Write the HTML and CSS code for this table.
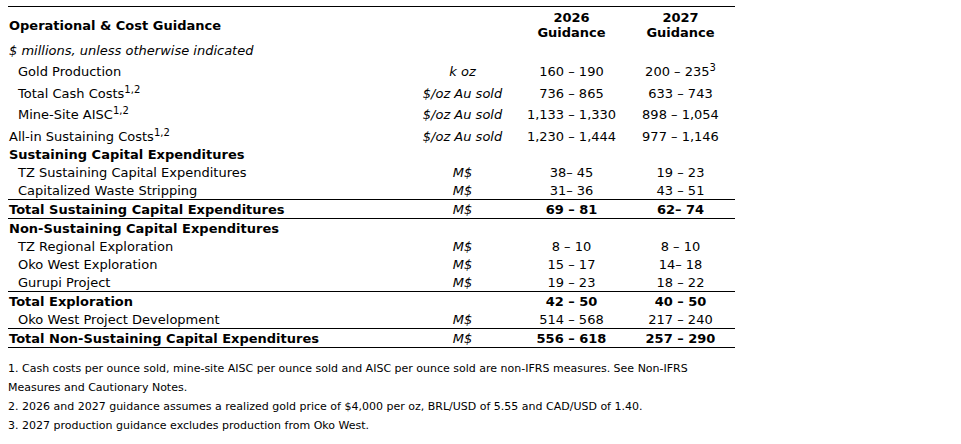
FILE: index.html
```html
<!DOCTYPE html>
<html lang="en">
<head>
<meta charset="utf-8">
<title>Operational &amp; Cost Guidance</title>
<link rel="stylesheet" href="styles.css">
</head>
<body>
<div class="wrap">
  <table class="guide">
    <colgroup>
      <col class="c-label">
      <col class="c-unit">
      <col class="c-num">
      <col class="c-num">
    </colgroup>
    <thead>
      <tr class="head">
        <th class="label">Operational &amp; Cost Guidance</th>
        <th></th>
        <th class="num">2026<br>Guidance</th>
        <th class="num">2027<br>Guidance</th>
      </tr>
    </thead>
    <tbody>
      <tr><td class="label note" colspan="4">$ millions, unless otherwise indicated</td></tr>
      <tr class="sup-a"><td class="label ind">Gold Production</td><td class="unit">k oz</td><td class="num">160 – 190</td><td class="num">200 – 235<sup>3</sup></td></tr>
      <tr class="sup-b"><td class="label ind">Total Cash Costs<sup>1,2</sup></td><td class="unit">$/oz Au sold</td><td class="num">736 – 865</td><td class="num">633 – 743</td></tr>
      <tr class="sup-a"><td class="label ind">Mine-Site AISC<sup>1,2</sup></td><td class="unit">$/oz Au sold</td><td class="num">1,133 – 1,330</td><td class="num">898 – 1,054</td></tr>
      <tr class="sup-b"><td class="label">All-in Sustaining Costs<sup>1,2</sup></td><td class="unit">$/oz Au sold</td><td class="num">1,230 – 1,444</td><td class="num">977 – 1,146</td></tr>
      <tr><td class="label bold" colspan="4">Sustaining Capital Expenditures</td></tr>
      <tr><td class="label ind">TZ Sustaining Capital Expenditures</td><td class="unit">M$</td><td class="num">38– 45</td><td class="num">19 – 23</td></tr>
      <tr><td class="label ind">Capitalized Waste Stripping</td><td class="unit">M$</td><td class="num">31– 36</td><td class="num">43 – 51</td></tr>
      <tr class="total boxed"><td class="label bold">Total Sustaining Capital Expenditures</td><td class="unit">M$</td><td class="num bold">69 – 81</td><td class="num bold">62– 74</td></tr>
      <tr><td class="label bold" colspan="4">Non-Sustaining Capital Expenditures</td></tr>
      <tr><td class="label ind">TZ Regional Exploration</td><td class="unit">M$</td><td class="num">8 – 10</td><td class="num">8 – 10</td></tr>
      <tr><td class="label ind">Oko West Exploration</td><td class="unit">M$</td><td class="num">15 – 17</td><td class="num">14– 18</td></tr>
      <tr><td class="label ind">Gurupi Project</td><td class="unit">M$</td><td class="num">19 – 23</td><td class="num">18 – 22</td></tr>
      <tr class="total"><td class="label bold">Total Exploration</td><td class="unit"></td><td class="num bold">42 – 50</td><td class="num bold">40 – 50</td></tr>
      <tr><td class="label ind">Oko West Project Development</td><td class="unit">M$</td><td class="num">514 – 568</td><td class="num">217 – 240</td></tr>
      <tr class="total boxed"><td class="label bold">Total Non-Sustaining Capital Expenditures</td><td class="unit">M$</td><td class="num bold">556 – 618</td><td class="num bold">257 – 290</td></tr>
    </tbody>
  </table>
  <div class="notes">
    <p>1. Cash costs per ounce sold, mine-site AISC per ounce sold and AISC per ounce sold are non-IFRS measures. See Non-IFRS Measures and Cautionary Notes.</p>
    <p>2. 2026 and 2027 guidance assumes a realized gold price of $4,000 per oz, BRL/USD of 5.55 and CAD/USD of 1.40.</p>
    <p>3. 2027 production guidance excludes production from Oko West.</p>
  </div>
</div>
</body>
</html>
```

FILE: styles.css
```css
html, body {
  margin: 0;
  padding: 0;
  background: #ffffff;
}

body {
  font-family: Verdana, "DejaVu Sans", sans-serif;
  color: #000000;
}

.wrap {
  width: 727px;
  padding: 6px 8px 0 8px;
}

.guide {
  width: 727px;
  border-collapse: collapse;
  table-layout: fixed;
  font-size: 13px;
  border-top: 1px solid #000;
}

.c-label { width: 400px; }
.c-unit { width: 109px; }
.c-num { width: 109px; }

.guide th,
.guide td {
  padding: 1px 0 0 0;
  line-height: 17px;
  white-space: nowrap;
}

.head th {
  line-height: 15px;
  padding-top: 3px;
  padding-bottom: 1px;
  font-weight: bold;
  vertical-align: middle;
}

.label {
  text-align: left;
  padding-left: 1px !important;
}

.ind {
  padding-left: 10px !important;
}

.note {
  font-style: italic;
}

.unit {
  text-align: center;
  font-style: italic;
}

.num {
  text-align: center;
}

.bold {
  font-weight: bold;
}

sup {
  font-size: 10px;
  line-height: 0;
  vertical-align: 5px;
}

.guide .sup-a td {
  padding-top: 4px;
}

.guide .sup-b td {
  padding-top: 5px;
}

.total td {
  border-top: 1px solid #000;
}

.boxed td {
  border-bottom: 1px solid #000;
}

.notes {
  margin-top: 11px;
  font-size: 11px;
  line-height: 19px;
}

.notes p {
  margin: 0;
}
```
